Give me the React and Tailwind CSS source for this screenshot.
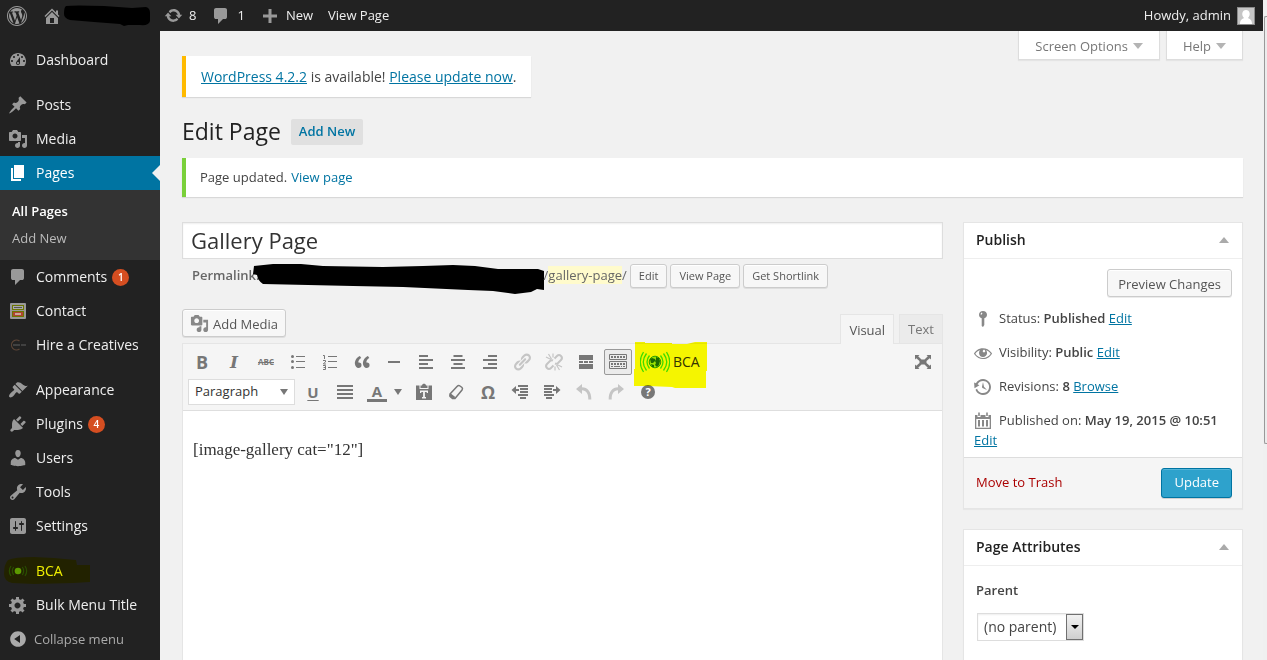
import React from "react";

const SANS = "font-['Open_Sans',sans-serif]";

const PATHS = {
  wordpress:
    "M20 10c0-5.52-4.48-10-10-10S0 4.48 0 10s4.48 10 10 10 10-4.48 10-10zM10 1.01c4.97 0 8.99 4.02 8.99 8.99s-4.02 8.99-8.99 8.99S1.01 14.97 1.01 10 5.03 1.01 10 1.01zM8.01 14.82L4.96 6.61c.49-.03 1.05-.08 1.05-.08.43-.05.38-1.01-.06-.99 0 0-1.29.1-2.13.1-.15 0-.33 0-.52-.01 1.44-2.17 3.9-3.6 6.7-3.6 2.09 0 3.99.79 5.41 2.09-.6-.08-1.45.35-1.45 1.42 0 .66.38 1.22.79 1.88.31.54.5 1.22.5 2.21 0 1.34-1.27 4.48-1.27 4.48l-2.71-7.5c.48-.03.75-.16.75-.16.43-.05.38-1.1-.05-1.08 0 0-1.3.11-2.14.11-.78 0-2.11-.11-2.11-.11-.43-.02-.48 1.06-.05 1.08l.84.08 1.12 3.04zm6.02 2.15L16.64 10s.67-1.69.39-3.81c.63 1.14.94 2.42.94 3.81 0 2.96-1.56 5.58-3.94 6.97zM2.68 6.77L6.5 17.25c-2.67-1.3-4.47-4.08-4.47-7.25 0-1.16.2-2.23.65-3.23zm7.45 4.53l2.29 6.25c-.75.27-1.57.42-2.42.42-.72 0-1.41-.11-2.06-.3z",
  home: "M16 8.5l1.53 1.53-1.06 1.06L10 4.6l-6.47 6.49-1.06-1.06L10 2.5l4 4v-2h2v4zm-6-2.46l6 5.99V18H4v-5.97zM12 17v-5H8v5h4z",
  update:
    "M10.2 3.28c3.53 0 6.43 2.61 6.92 6h2.08l-3.5 4-3.5-4h2.32c-.45-1.97-2.21-3.45-4.32-3.45-1.45 0-2.73.71-3.54 1.78L4.95 5.66C6.23 4.2 8.11 3.28 10.2 3.28zm-.4 13.44c-3.52 0-6.43-2.61-6.92-6H.8l3.5-4c1.17 1.33 2.33 2.67 3.5 4H5.48c.45 1.97 2.21 3.45 4.32 3.45 1.45 0 2.73-.71 3.54-1.78l1.71 1.95c-1.28 1.46-3.15 2.38-5.25 2.38z",
  comment:
    "M5 2h9q.82 0 1.41.59T16 4v7q0 .82-.59 1.41T14 13h-2l-5 5v-5H5q-.82 0-1.41-.59T3 11V4q0-.82.59-1.41T5 2z",
  plus: "M17 8.5v3h-5.5V17h-3v-5.5H3v-3h5.5V3h3v5.5z",
  dashboard:
    "M3.76 16h12.48c1.1-1.37 1.76-3.11 1.76-5 0-4.42-3.58-8-8-8s-8 3.58-8 8c0 1.89.66 3.63 1.76 5zM10 4c.55 0 1 .45 1 1s-.45 1-1 1-1-.45-1-1 .45-1 1-1zM6 6c.55 0 1 .45 1 1s-.45 1-1 1-1-.45-1-1 .45-1 1-1zm8 0c.55 0 1 .45 1 1s-.45 1-1 1-1-.45-1-1 .45-1 1-1zm-5.37 5.55L12 7v6c0 1.1-.9 2-2 2s-2-.9-2-2c0-.57.24-1.08.63-1.45zM4 10c.55 0 1 .45 1 1s-.45 1-1 1-1-.45-1-1 .45-1 1-1zm12 0c.55 0 1 .45 1 1s-.45 1-1 1-1-.45-1-1 .45-1 1-1zm-5 3c0-.55-.45-1-1-1s-1 .45-1 1 .45 1 1 1 1-.45 1-1z",
  post: "M10.44 3.02l1.82-1.82 6.36 6.35-1.83 1.82c-1.05-.68-2.48-.57-3.41.36l-.75.75c-.92.93-1.04 2.35-.35 3.41l-1.83 1.82-2.41-2.41-2.8 2.79c-.42.42-3.38 2.71-3.8 2.29s1.86-3.39 2.28-3.81l2.79-2.79L4.1 9.36l1.83-1.82c1.05.69 2.48.57 3.4-.36l.75-.75c.93-.92 1.05-2.35.36-3.41z",
  media:
    "M13 11V4c0-.55-.45-1-1-1h-1.67L9 1H5L3.67 3H2c-.55 0-1 .45-1 1v7c0 .55.45 1 1 1h10c.55 0 1-.45 1-1zM7 4.5c1.38 0 2.5 1.12 2.5 2.5S8.38 9.5 7 9.5 4.5 8.38 4.5 7 5.62 4.5 7 4.5zM14 6h5v10.5c0 1.38-1.12 2.5-2.5 2.5S14 17.88 14 16.5s1.12-2.5 2.5-2.5c.17 0 .34.02.5.05V9h-3V6zm-4 8.05V13h2v3.5c0 1.38-1.12 2.5-2.5 2.5S7 17.88 7 16.5 8.12 14 9.5 14c.17 0 .34.02.5.05z",
  page: "M6 15V2h10v13H6zm-1 1h8v2H3V5h2v11z",
  appearance:
    "M14.48 11.06L7.41 3.99l1.5-1.5c.5-.56 2.3-.47 3.51.32 1.21.8 1.43 1.28 2.91 2.1 1.18.64 2.45 1.26 4.45.85zm-.71.71L6.7 4.7 4.93 6.47c-.39.39-.39 1.02 0 1.41l1.06 1.06c.39.39.39 1.03 0 1.42-.6.6-1.43 1.11-2.21 1.69-.35.26-.7.53-1.01.84C1.43 14.23.4 16.08 1.4 17.07c.99 1 2.84-.03 4.18-1.36.31-.31.58-.66.85-1.02.57-.78 1.08-1.61 1.69-2.21.39-.39 1.02-.39 1.41 0l1.06 1.06c.39.39 1.02.39 1.41 0z",
  plugins:
    "M13.11 4.36L9.87 7.6 8 5.73l3.24-3.24c.35-.34 1.05-.2 1.56.32.52.51.66 1.21.31 1.55zm-8 1.77l.91-1.12 9.01 9.01-1.19.84c-.71.71-2.63 1.16-3.82 1.16H6.14L4.9 17.26c-.59.59-1.54.59-2.12 0-.59-.58-.59-1.53 0-2.12l1.24-1.24v-3.88c0-1.13.4-3.19 1.09-3.89zm7.26 3.97l3.24-3.24c.34-.35 1.04-.21 1.55.31.52.51.66 1.21.31 1.55l-3.24 3.25z",
  users:
    "M10 9.25c-2.27 0-2.73-3.44-2.73-3.44C7 4.02 7.82 2 9.97 2c2.16 0 2.98 2.02 2.71 3.81 0 0-.41 3.44-2.68 3.44zm0 2.57L12.72 10c2.39 0 4.52 2.33 4.52 4.53v2.49s-3.65 1.13-7.24 1.13c-3.65 0-7.24-1.13-7.24-1.13v-2.49c0-2.25 1.94-4.48 4.47-4.48z",
  tools:
    "M16.68 9.77c-1.34 1.34-3.3 1.67-4.95.99l-5.41 6.52c-.99.99-2.59.99-3.58 0s-.99-2.59 0-3.57l6.52-5.42c-.68-1.65-.35-3.61.99-4.95 1.28-1.28 3.12-1.62 4.72-1.06l-2.89 2.89 2.82 2.82 2.86-2.87c.53 1.58.18 3.39-1.08 4.65zM3.81 16.21c.4.39 1.04.39 1.43 0 .4-.4.4-1.04 0-1.43-.39-.4-1.03-.4-1.43 0-.39.39-.39 1.03 0 1.43z",
  settings:
    "M18 16V4c0-1.1-.9-2-2-2H4c-1.1 0-2 .9-2 2v12c0 1.1.9 2 2 2h12c1.1 0 2-.9 2-2zM8 11h1c.55 0 1 .45 1 1s-.45 1-1 1H8v1.5c0 .28-.22.5-.5.5s-.5-.22-.5-.5V13H6c-.55 0-1-.45-1-1s.45-1 1-1h1V5.5c0-.28.22-.5.5-.5s.5.22.5.5V11zm5-2h-1c-.55 0-1-.45-1-1s.45-1 1-1h1V5.5c0-.28.22-.5.5-.5s.5.22.5.5V7h1c.55 0 1 .45 1 1s-.45 1-1 1h-1v5.5c0 .28-.22.5-.5.5s-.5-.22-.5-.5V9z",
  generic:
    "M18 12h-2.18c-.17.7-.44 1.35-.81 1.93l1.54 1.54-2.1 2.1-1.54-1.54c-.58.36-1.23.63-1.91.79V19H8v-2.18c-.68-.16-1.33-.43-1.91-.79l-1.54 1.54-2.12-2.12 1.54-1.54c-.36-.58-.63-1.23-.79-1.91H1V9.03h2.17c.16-.7.44-1.35.8-1.94L2.43 5.55l2.1-2.1 1.54 1.54c.58-.37 1.24-.64 1.93-.81V2h3v2.18c.68.16 1.33.43 1.91.79l1.54-1.54 2.12 2.12-1.54 1.54c.36.59.64 1.24.8 1.94H18V12zm-8.5 1.5c1.66 0 3-1.34 3-3s-1.34-3-3-3-3 1.34-3 3 1.34 3 3 3z",
  collapse:
    "M10 2.16c4.33 0 7.84 3.51 7.84 7.84s-3.51 7.84-7.84 7.84S2.16 14.33 2.16 10 5.71 2.16 10 2.16zm2 11.72V6.12L6.18 9.97z",
  quote:
    "M9.49 13.22c0-.74-.2-1.38-.61-1.9-.62-.78-1.83-.88-2.53-.72-.29-1.65 1.11-3.75 2.92-4.65L7.88 4c-2.73 1.3-5.42 4.28-4.96 8.05C3.21 14.43 4.59 16 6.54 16c.85 0 1.56-.25 2.12-.75s.83-1.18.83-2.03zm8.05 0c0-.74-.2-1.38-.61-1.9-.63-.78-1.83-.88-2.53-.72-.29-1.65 1.11-3.75 2.92-4.65L15.93 4c-2.73 1.3-5.41 4.28-4.95 8.05.29 2.38 1.66 3.95 3.61 3.95.85 0 1.56-.25 2.12-.75s.83-1.18.83-2.03z",
  link: "M17.74 2.76c1.68 1.69 1.68 4.41 0 6.1l-1.53 1.52c-1.12 1.12-2.7 1.47-4.14 1.09l2.62-2.61.76-.77.76-.76c.84-.84.84-2.2 0-3.04-.84-.85-2.2-.85-3.04 0l-.77.76-3.38 3.38c-.37-1.44-.02-3.02 1.1-4.14l1.52-1.53c1.69-1.68 4.42-1.68 6.1 0zM8.59 13.43l5.34-5.34c.42-.42.42-1.1 0-1.52-.44-.43-1.13-.39-1.53 0l-5.33 5.34c-.42.42-.42 1.1 0 1.52.44.43 1.13.39 1.52 0zm-.76 2.29l4.14-4.15c.38 1.44.03 3.02-1.09 4.14l-1.52 1.53c-1.69 1.68-4.41 1.68-6.1 0-1.68-1.68-1.68-4.42 0-6.1l1.53-1.52c1.12-1.12 2.7-1.47 4.14-1.1l-4.14 4.15c-.85.84-.85 2.2 0 3.05.84.84 2.2.84 3.04 0z",
  eye: "M18.3 9.5C15 4.9 8.5 3.8 3.9 7.2c-1.2.9-2.2 2.1-3 3.4.2.4.5.8.8 1.2 3.3 4.6 9.6 5.6 14.2 2.4.9-.7 1.7-1.4 2.4-2.4.3-.4.5-.8.8-1.2-.3-.4-.5-.8-.8-1.1zm-8.2-2.3c.5-.5 1.3-.5 1.8 0s.5 1.3 0 1.8-1.3.5-1.8 0-.5-1.3 0-1.8zm-.1 7.7c-3.1 0-6-1.6-7.7-4.2C3.5 9 5.1 7.8 7 7.2c-.7.8-1 1.7-1 2.7 0 2.2 1.7 4.1 4 4.1 2.2 0 4.1-1.7 4.1-4v-.1c0-1-.4-2-1.1-2.7 1.9.6 3.5 1.8 4.7 3.5-1.7 2.6-4.6 4.2-7.7 4.2z",
  revisions:
    "M13.65 2.88c3.93 2.01 5.48 6.84 3.47 10.77s-6.83 5.48-10.77 3.47c-1.87-.96-3.2-2.56-3.86-4.4l1.64-1.03c.45 1.57 1.52 2.95 3.08 3.76 3.01 1.54 6.69.35 8.23-2.66 1.55-3.01.36-6.69-2.65-8.24C9.78 3.01 6.1 4.2 4.56 7.21l1.88.97-4.95 3.08-.39-5.82 1.78.91C4.9 2.4 9.75.89 13.65 2.88zm-4.36 7.83C9.11 10.53 9 10.28 9 10c0-.07.03-.12.04-.19h-.01L10 5l.97 4.81L14 13l-4.5-2.12.02-.02c-.08-.04-.16-.09-.23-.15z",
  pin: "M10 2c2.3 0 4 1.6 4 3.7 0 1.7-1.1 3-2.7 3.5V16l-1.3 2-1.3-1V9.2C7.1 8.7 6 7.4 6 5.7 6 3.6 7.7 2 10 2zM8.8 3.6c-.8.4-1.2 1.1-1.2 1.9l1 .2c.1-.7.3-1.1.9-1.5z",
  calendar:
    "M2 4h2.500v2h3V4h5v2h3V4H18v14H2zm1.300 4v8.700h13.400V8zM5 9h2v6.500H5zm4 0h2v6.500H9zm4 0h2v6.500h-2zM5.200 1.500h1.600V5H5.200zm8 0h1.600V5h-1.600z",
  alignCenter: "M5.5 3h9v2h-9zM3 7h14v2H3zm2.5 4h9v2h-9zM3 15h14v2H3z",
  alignRight: "M8 3h9v2H8zM3 7h14v2H3zm5 4h9v2H8zM3 15h14v2H3z",
  alignLeft: "M3 3h9v2H3zm0 4h14v2H3zm0 4h9v2H3zm0 4h14v2H3z",
  justify: "M2 3h16v2H2zm0 4h16v2H2zm0 4h16v2H2zm0 4h16v2H2z",
  hr: "M4 9h12v2H4z",
  more: "M3 3h14v5H3zM3 9h4v2H3zm5 0h4v2H8zm5 0h4v2h-4zM3 12h14v5H3z",
  undo: "M8 2v3.2c5.5.2 9.500 4.200 9.300 12.300h-3c.1-6-2-8.900-6.300-9.200V12L2 7z",
  redo: "M12 2v3.200c-5.500.2-9.500 4.200-9.300 12.300h3c-.1-6 2-8.900 6.300-9.200V12l6-5z",
  outdent: "M8 3h10v2H8zm2 3h8v2h-8zm0 3h8v2h-8zm-2 3h10v2H8zm2 3h6v2h-6zM6 4v3h3v2H6v3L1.500 8z",
  indent: "M2 3h10v2H2zm0 3h8v2H2zm0 3h8v2H2zm0 3h10v2H2zm2 3h6v2H4zM14 4v3h-3v2h3v3l4.500-4z",
  paste:
    "M6.500 3.500H8C8 1 12 1 12 3.500h1.500V6h-7zM2 3.500h3.500V7h9V3.500H18V18H2zM6 8.500V11h1.300v-1h1.800v5H8v1.500h4V15h-1.100v-5h1.800v1H14V8.500z",
  expand:
    "M2 3h4.500L5.200 4.300 8.500 7.500h3l3.300-3.200L13.500 3H18v4.500l-1.300-1.300L13.500 9v2l3.200 2.800 1.300-1.300V17h-4.500l1.300-1.300-3.300-3.200h-3l-3.300 3.200L6.500 17H2v-4.500l1.300 1.300L6.500 11V9L3.300 6.200 2 7.500z",
};

function Icon({ name, className = "size-5" }) {
  return (
    <svg viewBox="0 0 20 20" className={`shrink-0 fill-current ${className}`} aria-hidden="true">
      <path d={PATHS[name]} fillRule={name === "calendar" || name === "paste" ? "evenodd" : "nonzero"} />
    </svg>
  );
}

function ContactIcon() {
  return (
    <svg viewBox="0 0 20 20" className="size-5 shrink-0" aria-hidden="true">
      <rect x="2" y="2" width="16" height="16" rx="1" fill="#999" />
      <rect x="4" y="4" width="12" height="5" fill="#6d7600" />
      <rect x="5" y="5" width="10" height="3" fill="#aaa" />
      <rect x="6" y="6" width="8" height="1" fill="#555" />
      <rect x="4" y="10" width="12" height="6" fill="#6d7600" />
      <rect x="5" y="11" width="10" height="4" fill="#b0462f" />
      <rect x="7" y="12" width="6" height="2" fill="#c9a59c" />
    </svg>
  );
}

function HireIcon() {
  return (
    <svg viewBox="0 0 20 20" className="size-5 shrink-0" fill="none" aria-hidden="true">
      <path d="M11.500 6A5 5 0 1 0 11.500 14" stroke="#5c4537" strokeWidth="1.200" />
      <path d="M5 10h7M13 10h5" stroke="#606060" strokeWidth="1.200" />
    </svg>
  );
}

function SignalIcon({ className, small }) {
  return (
    <svg viewBox="0 0 30 22" className={`shrink-0 ${className}`} fill="none" aria-hidden="true">
      {small ? (
        <g stroke="#2c5a24" strokeWidth="1.800">
          <path d="M8.500 5q-4 6 0 12M21.500 5q4 6 0 12M4.500 3.500q-5 7.500 0 15M25.500 3.500q5 7.500 0 15" opacity=".8" />
          <circle cx="15" cy="11" r="5" fill="#5c9a24" stroke="none" />
        </g>
      ) : (
        <g stroke="#3ddc2c" strokeWidth="1.300">
          <path d="M9.500 4.500q-5 6.500 0 13M6.500 2.500q-6.500 8.500 0 17M3.500 1q-6.500 10 0 20M20.500 4.500q5 6.500 0 13M23.500 2.500q6.500 8.500 0 17M26.500 1q6.500 10 0 20" />
          <circle cx="15" cy="11" r="5.800" fill="#9be05a" stroke="#2d9f28" strokeWidth="1" />
          <path d="M10 8l2-1 3 1 0 2-2 2-2 0zM16 6l3 1 1 3-1 4-2 2-2-2 1-2-1-2 1-2zM11 13l3 1 0 2-2 0z" fill="#1d6a2a" stroke="none" />
        </g>
      )}
    </svg>
  );
}

function MenuItem({ icon, label, badge, current, children }) {
  return (
    <li className="relative">
      <a
        href="#"
        className={`flex h-[34px] items-center gap-2 px-2 text-sm ${
          current ? "bg-[#0074a2] text-white" : "text-[#eee]"
        }`}
      >
        <span className={current ? "text-white" : "text-[#999]"}>
          {typeof icon === "string" ? <Icon name={icon} /> : icon}
        </span>
        <span className="flex items-center gap-[5px] whitespace-nowrap">
          {label}
          {badge && (
            <span className="flex size-[17px] items-center justify-center rounded-full bg-[#d54e21] text-[10px] font-semibold text-white">
              {badge}
            </span>
          )}
        </span>
        {current && (
          <span className="absolute top-[9px] right-0 border-y-8 border-r-8 border-y-transparent border-r-[#f1f1f1]" />
        )}
      </a>
      {children}
    </li>
  );
}

function Sidebar() {
  return (
    <nav className="w-40 shrink-0 bg-[#222] pt-3" aria-label="Main menu">
      <ul>
        <MenuItem icon="dashboard" label="Dashboard" />
        <li className="h-[11px]" />
        <MenuItem icon="post" label="Posts" />
        <MenuItem icon="media" label="Media" />
        <MenuItem icon="page" label="Pages" current>
          <ul className="flex h-[70px] flex-col bg-[#333] px-3 pt-2 text-[13px]">
            <li className="leading-[27px]">
              <a href="#" className="font-semibold text-white">All Pages</a>
            </li>
            <li className="leading-[27px]">
              <a href="#" className="text-[#bbb]">Add New</a>
            </li>
          </ul>
        </MenuItem>
        <MenuItem icon="comment" label="Comments" badge="1" />
        <MenuItem icon={<ContactIcon />} label="Contact" />
        <MenuItem icon={<HireIcon />} label="Hire a Creatives" />
        <li className="h-[11px]" />
        <MenuItem icon="appearance" label="Appearance" />
        <MenuItem icon="plugins" label="Plugins" badge="4" />
        <MenuItem icon="users" label="Users" />
        <MenuItem icon="tools" label="Tools" />
        <MenuItem icon="settings" label="Settings" />
        <li className="h-[11px]" />
        <MenuItem icon={<SignalIcon small className="h-5 w-5" />} label="BCA">
          <svg
            viewBox="0 0 86 28"
            className="pointer-events-none absolute top-[2px] left-1 h-7 w-[86px] fill-[#ffff00] mix-blend-multiply"
            aria-hidden="true"
          >
            <path d="M4 4Q10 1 30 1L50 2 72 4 73 9H86V26L70 27 30 28 8 27Q0 25 0 18 0 8 4 4z" />
          </svg>
        </MenuItem>
        <MenuItem icon="generic" label="Bulk Menu Title" />
        <li>
          <button type="button" className="flex h-[34px] items-center gap-1.5 px-2 text-[13px] leading-5 text-[#aaa]">
            <Icon name="collapse" />
            Collapse menu
          </button>
        </li>
      </ul>
    </nav>
  );
}

function AdminBar() {
  return (
    <header className="flex h-[31px] items-center bg-[#222] pr-2 pl-[7px] text-[13px] text-[#eee]">
      <a href="#" aria-label="About WordPress" className="mr-[15px] text-[#999]">
        <Icon name="wordpress" />
      </a>
      <a href="#" className="mr-3.5 flex items-center gap-0.5 text-[#999]" aria-label="Visit site">
        <Icon name="home" />
        <svg viewBox="0 0 86 22" className="h-[22px] w-[86px] fill-black" aria-hidden="true">
          <path d="M2 1Q10 0 40 1L68 3 82 2Q86 3 86 8V16Q85 21 76 20L64 20 60 21 56 19 30 17 6 15Q0 13 0 9 0 2 2 1z" />
        </svg>
      </a>
      <a href="#" className="mr-[15px] flex items-center gap-1.5">
        <span className="text-[#999]"><Icon name="update" className="size-[19px]" /></span>8
      </a>
      <a href="#" className="mr-[15px] flex items-center gap-1.5">
        <span className="text-[#999]"><Icon name="comment" /></span>1
      </a>
      <a href="#" className="mr-[15px] flex items-center gap-1.5">
        <span className="text-[#999]"><Icon name="plus" /></span>New
      </a>
      <a href="#">View Page</a>
      <a href="#" className="ml-auto flex items-center gap-1.5">
        Howdy, admin
        <svg viewBox="0 0 18 18" className="size-[18px]" aria-hidden="true">
          <rect width="18" height="18" fill="#8a8a8a" />
          <rect x="1" y="1" width="16" height="16" fill="#c5c5c5" />
          <path d="M3 17c0-4 2-5 4-6C4 8 5 3 9 3s5 5 2 8c2 1 4 2 4 6z" fill="#fff" />
        </svg>
      </a>
    </header>
  );
}

const BTN =
  "rounded-[3px] border border-[#ccc] bg-[#f7f7f7] text-[#555] shadow-[0_1px_0_rgba(0,0,0,0.08),inset_0_1px_0_#fff] whitespace-nowrap";
const BTN_LARGE = `h-7 pt-px text-[13px] leading-5 ${BTN}`;

function MetaTab({ label }) {
  return (
    <button
      type="button"
      className="flex h-[29px] items-center gap-[5px] border border-t-0 border-[#ddd] bg-white px-4 pt-px text-[13px] leading-5 text-[#777] shadow-[0_1px_1px_rgba(0,0,0,0.05)]"
    >
      {label}
      <span className="border-x-[5px] border-t-[6px] border-x-transparent border-t-[#b4b4b4]" />
    </button>
  );
}

function Tool({ label, active, faded, children }) {
  return (
    <button
      type="button"
      aria-label={label}
      className={`flex h-[26px] w-7 shrink-0 items-center justify-center ${
        active ? "rounded-xs border border-[#999] bg-[#ebebeb]" : ""
      } ${faded ? "text-[#c5c5c5]" : "text-[#777]"}`}
    >
      {children}
    </button>
  );
}

function BulletList() {
  return (
    <svg viewBox="0 0 20 20" className="size-5 fill-current" aria-hidden="true">
      <circle cx="4.500" cy="4.500" r="1.500" />
      <circle cx="4.500" cy="9.500" r="1.500" />
      <circle cx="4.500" cy="15.500" r="1.500" />
      <path d="M8 4h9v1H8zM8 9h9v1H8zM8 15h9v1H8z" />
    </svg>
  );
}

function NumberList() {
  return (
    <svg viewBox="0 0 20 20" className="size-5" fill="none" stroke="currentColor" aria-hidden="true">
      <path d="M8 4.500h9M8 9.500h9M8 15.500h9" />
      <path d="M3 3.500h1.500V7M3 8.500h2.500v1.500L3.500 11.500v.5H6M3 13.500h2.500v4H3M3.500 15.500h2" />
    </svg>
  );
}

function UnlinkIcon() {
  return (
    <svg viewBox="0 0 20 20" className="size-5" fill="none" stroke="currentColor" aria-hidden="true">
      <path d="M10.500 6.500L13 4q2-2 4 0t0 4l-3 3q-1.500 1.200-3 .5M9.500 13.500L7 16q-2 2-4 0t0-4l3-3q1.500-1.200 3-.5" strokeWidth="2" />
      <path d="M2 5l5 2.500M4.500 2l3 5M9 1.500v4M18 15l-5-2.500M15.500 18l-3-5M11 18.500v-4" strokeWidth="1.200" />
    </svg>
  );
}

function KeyboardIcon() {
  return (
    <svg viewBox="0 0 20 20" className="size-5" fill="none" stroke="currentColor" aria-hidden="true">
      <path d="M1.500 2.500h17v5h-17zM1.500 9.500h17v7h-17z" strokeWidth="1" />
      <path d="M3 5h14M3 12h14" strokeWidth="2" strokeDasharray="2 1" />
      <path d="M3 14.500h2M6 14.500h6M13 14.500h1M15 14.500h2" strokeWidth="1" />
    </svg>
  );
}

function EraserIcon() {
  return (
    <svg viewBox="0 0 20 20" className="size-5" fill="none" stroke="currentColor" aria-hidden="true">
      <path d="M4 12L11 4.500Q12.500 3 14 4L16 5.500Q17 6.500 16 8L9 16.500H6.500L4 14.500z" strokeWidth="1.500" />
      <path d="M4 12.500l4.500 3.500" strokeWidth="2.500" />
    </svg>
  );
}

function Toolbar() {
  return (
    <div className="relative flex flex-col gap-1 border-b border-[#dedede] bg-[#f5f5f5] p-[5px]">
      <div className="flex h-[26px] gap-1">
        <Tool label="Bold"><b className="text-[18px] leading-5">B</b></Tool>
        <Tool label="Italic">
          <span className="font-['DejaVu_Serif',serif] text-[17px] leading-5 font-bold italic">I</span>
        </Tool>
        <Tool label="Strikethrough"><span className="text-[8px] font-bold line-through">ABC</span></Tool>
        <Tool label="Bulleted list"><BulletList /></Tool>
        <Tool label="Numbered list"><NumberList /></Tool>
        <Tool label="Blockquote"><Icon name="quote" /></Tool>
        <Tool label="Horizontal line"><Icon name="hr" /></Tool>
        <Tool label="Align left"><Icon name="alignLeft" /></Tool>
        <Tool label="Align center"><Icon name="alignCenter" /></Tool>
        <Tool label="Align right"><Icon name="alignRight" /></Tool>
        <Tool label="Insert link" faded><Icon name="link" /></Tool>
        <Tool label="Remove link" faded><UnlinkIcon /></Tool>
        <Tool label="Read more tag"><Icon name="more" /></Tool>
        <Tool label="Toolbar toggle" active><KeyboardIcon /></Tool>
        <button type="button" className="flex h-[26px] items-center gap-[3px] px-1 text-sm text-[#333]">
          <SignalIcon className="h-[22px] w-[30px]" />
          BCA
        </button>
        <span className="ml-auto">
          <Tool label="Distraction free writing"><Icon name="expand" /></Tool>
        </span>
      </div>
      <div className="flex h-[26px] gap-1">
        <span className="relative">
          <select
            aria-label="Format"
            className="block h-[26px] w-[107px] appearance-none border border-[#ddd] bg-white pl-1.5 text-[13px] text-[#333]"
          >
            <option>Paragraph</option>
          </select>
          <span className="pointer-events-none absolute top-2.5 right-[7px] border-x-4 border-t-[6px] border-x-transparent border-t-[#777]" />
        </span>
        <Tool label="Underline"><span className="text-[15px] leading-5 font-bold underline underline-offset-2">U</span></Tool>
        <Tool label="Justify"><Icon name="justify" /></Tool>
        <button type="button" aria-label="Text color" className="flex h-[26px] w-[43px] items-center gap-[7px] pl-1 text-[#777]">
          <span className="w-5 border-b-[3px] border-[#777] text-center text-[15px] leading-4 font-bold">A</span>
          <span className="border-x-4 border-t-[6px] border-x-transparent border-t-[#777]" />
        </button>
        <Tool label="Paste as text"><Icon name="paste" /></Tool>
        <Tool label="Clear formatting"><EraserIcon /></Tool>
        <Tool label="Special character"><b className="text-[18px] leading-5">Ω</b></Tool>
        <Tool label="Decrease indent"><Icon name="outdent" /></Tool>
        <Tool label="Increase indent"><Icon name="indent" /></Tool>
        <Tool label="Undo" faded><Icon name="undo" /></Tool>
        <Tool label="Redo" faded><Icon name="redo" /></Tool>
        <Tool label="Keyboard shortcuts">
          <span className="flex size-3.5 items-center justify-center rounded-full bg-[#777] text-[11px] font-bold text-white">?</span>
        </Tool>
      </div>
      <svg
        viewBox="0 0 73 46"
        className="pointer-events-none absolute -top-0.5 left-[451px] h-[46px] w-[73px] fill-[#ffff00] mix-blend-multiply"
        aria-hidden="true"
      >
        <path d="M1 0H11V1H38V2H53L61 0H73V29H72V46H41L38 45 14 44H0V27H1z" />
      </svg>
    </div>
  );
}

function Editor() {
  return (
    <section className="min-w-0 flex-1">
      <input
        aria-label="Title"
        defaultValue="Gallery Page"
        className="block h-[37px] w-full border border-[#ddd] bg-white px-2 pb-0.5 text-[22px] text-[#333] shadow-[inset_0_1px_2px_rgba(0,0,0,0.07)]"
      />
      <div className="mt-[5px] flex h-6 items-center pl-2.5 text-[13px] text-[#666]">
        <b className="font-semibold">Permalink:</b>
        <svg viewBox="0 0 292 30" className="mt-1.5 -mr-px -ml-[7px] h-[30px] w-[292px] shrink-0 fill-black" aria-hidden="true">
          <path d="M1 2L20 0H48L70 2 130 3 170 2 200 1 222 2 245 5 285 5 291 7V26L284 25 278 28 262 30 240 27 215 26 150 23 100 22 10 20Q5 17 4 11L0 10z" />
        </svg>
        <span>/<span className="bg-[#fffbcc]">gallery-page</span>/</span>
        <div className="ml-[3px] flex gap-[3px] text-[11px]">
          <button type="button" className={`h-6 px-2 ${BTN}`}>Edit</button>
          <button type="button" className={`h-6 px-2 ${BTN}`}>View Page</button>
          <button type="button" className={`h-6 px-2 ${BTN}`}>Get Shortlink</button>
        </div>
      </div>
      <div className="mt-[21px] flex h-[34px] items-start">
        <button type="button" className={`flex items-center gap-1 px-[7px] ${BTN_LARGE}`}>
          <span className="text-[#888]"><Icon name="media" className="size-[19px]" /></span>
          Add Media
        </button>
        <div className="z-10 ml-auto flex gap-[5px] pt-[5px] text-[13px] leading-5">
          <button type="button" className="h-[30px] border border-b-0 border-[#e5e5e5] bg-[#f5f5f5] px-2 text-[#555]">Visual</button>
          <button type="button" className="h-[29px] border border-b-0 border-[#e5e5e5] bg-[#ebebeb] px-2 text-[#777]">Text</button>
        </div>
      </div>
      <div className="border border-[#e5e5e5] bg-white">
        <Toolbar />
        <div
          contentEditable
          suppressContentEditableWarning
          role="textbox"
          aria-label="Page content"
          className="min-h-80 px-2.5 pt-[27px] font-['Liberation_Serif',serif] text-[17px] leading-6 text-[#333]"
        >
          [image-gallery cat="12"]
        </div>
      </div>
    </section>
  );
}

function Box({ title, children }) {
  return (
    <section className="border border-[#e5e5e5] bg-white shadow-[0_1px_1px_rgba(0,0,0,0.04)]">
      <div className="flex h-9 items-center justify-between border-b border-[#eee] px-3 pb-0.5">
        <h2 className="text-sm font-semibold text-[#222]">{title}</h2>
        <button type="button" aria-label={`Toggle ${title}`} className="px-px">
          <span className="block border-x-[5px] border-b-[6px] border-x-transparent border-b-[#aaa]" />
        </button>
      </div>
      {children}
    </section>
  );
}

const LINK = "text-[#0074a2] underline";

function StatusRow({ icon, label, value, action }) {
  return (
    <div className="flex h-[34px] items-center gap-1.5">
      <span className="text-[#888]"><Icon name={icon} /></span>
      <span>
        {label}: <b className="font-semibold">{value}</b>
        {action && <>{" "}<a href="#" className={LINK}>{action}</a></>}
      </span>
    </div>
  );
}

function SideBoxes() {
  return (
    <aside className="flex w-70 shrink-0 flex-col gap-5">
      <Box title="Publish">
        <div className="flex justify-end px-2.5 pt-2.5">
          <button type="button" className={`px-2.5 ${BTN_LARGE}`}>Preview Changes</button>
        </div>
        <div className="px-[9px] pt-[5px] pb-[7px] text-[13px] text-[#444]">
          <StatusRow icon="pin" label="Status" value="Published" action="Edit" />
          <StatusRow icon="eye" label="Visibility" value="Public" action="Edit" />
          <StatusRow icon="revisions" label="Revisions" value="8" action="Browse" />
          <StatusRow icon="calendar" label="Published on" value="May 19, 2015 @ 10:51" />
          <div className="-mt-2 leading-5">
            <a href="#" className={`ml-px ${LINK}`}>Edit</a>
          </div>
        </div>
        <div className="flex h-[51px] items-center justify-between border-t border-[#ddd] bg-[#f5f5f5] pr-2.5 pl-3 text-[13px]">
          <a href="#" className="text-[#a00]">Move to Trash</a>
          <button
            type="button"
            className="h-[30px] rounded-[3px] border border-[#0074a2] bg-[#2ea2cc] px-3 text-white shadow-[inset_0_1px_0_rgba(120,200,230,0.5),0_1px_0_rgba(0,0,0,0.15)]"
          >
            Update
          </button>
        </div>
      </Box>
      <Box title="Page Attributes">
        <div className="flex flex-col items-start gap-3.5 px-3 pt-[15px] pb-16 text-[13px] text-[#444]">
          <label htmlFor="parent" className="leading-[18px] font-semibold">Parent</label>
          <span className="relative ml-px">
            <select
              id="parent"
              className="block h-7 w-[107px] appearance-none border border-[#ddd] bg-white pl-1.5 text-sm text-[#444] shadow-[inset_0_1px_2px_rgba(0,0,0,0.07)]"
            >
              <option>(no parent)</option>
            </select>
            <span className="pointer-events-none absolute top-px right-px flex h-[26px] w-[17px] items-center justify-center border border-[#707070] bg-linear-to-b from-[#f2f2f2] to-[#cfcfcf]">
              <span className="border-x-4 border-t-4 border-x-transparent border-t-black" />
            </span>
          </span>
        </div>
      </Box>
    </aside>
  );
}

export default function App() {
  return (
    <div className={`flex h-screen overflow-hidden bg-[#f1f1f1] leading-normal ${SANS}`}>
      <div className="flex min-w-0 flex-1 flex-col">
        <AdminBar />
        <div className="flex min-h-0 flex-1">
          <Sidebar />
          <main className="min-w-0 flex-1 pr-5 pl-[22px]">
            <div className="flex items-start justify-between">
              <p className="mt-[25px] flex h-[41px] items-center border-l-4 border-[#ffba00] bg-white px-[15px] text-sm text-[#444] shadow-[0_1px_1px_rgba(0,0,0,0.1)]">
                <span>
                  <a href="#" className={LINK}>WordPress 4.2.2</a> is available!{" "}
                  <a href="#" className={LINK}>Please update now</a>.
                </span>
              </p>
              <div className="flex gap-1.5">
                <MetaTab label="Screen Options" />
                <MetaTab label="Help" />
              </div>
            </div>
            <div className="mt-4 flex h-9 items-center gap-2.5">
              <h1 className="text-[23px] text-[#222]">Edit Page</h1>
              <a href="#" className="mt-0.5 flex h-[26px] items-center rounded-xs bg-[#e0e0e0] px-2 text-[13px] font-semibold text-[#0074a2]">
                Add New
              </a>
            </div>
            <div className="mt-[9px] mb-[25px] flex h-[39px] items-center gap-1 border-l-4 border-[#7ad03a] bg-white px-3.5 text-[13px] text-[#444] shadow-[0_1px_1px_rgba(0,0,0,0.1)]">
              <span>Page updated.</span>
              <a href="#" className="text-[#0074a2]">View page</a>
            </div>
            <div className="flex items-start gap-5">
              <Editor />
              <SideBoxes />
            </div>
          </main>
        </div>
      </div>
      <div className="flex w-1 shrink-0 flex-col bg-[#f0f0f0] pt-4 pl-px" aria-hidden="true">
        <div className="h-[428px] rounded-l-xs border border-r-0 border-[#999] bg-[#ececec]" />
      </div>
    </div>
  );
}
